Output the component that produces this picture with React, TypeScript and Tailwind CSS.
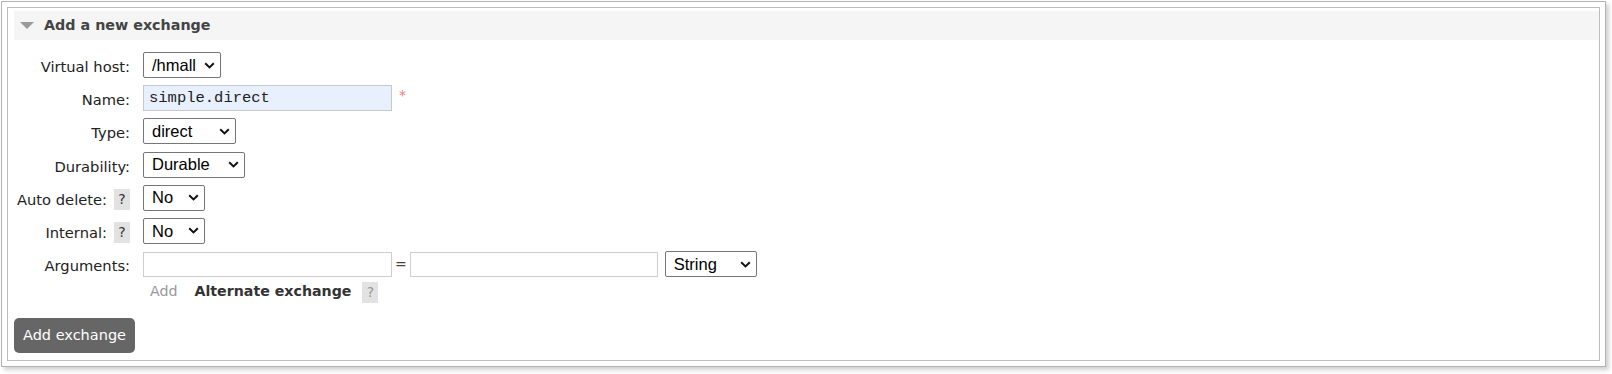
import type { ReactNode } from 'react'

const label = "font-['DejaVu_Sans',sans-serif] text-[14.7px] text-[#222]"

function Chevron() {
  return (
    <svg width="11" height="7" viewBox="0 0 11 7" className="shrink-0">
      <path d="M1.2 1.2 5.5 5.4 9.8 1.2" fill="none" stroke="#111" strokeWidth="2" />
    </svg>
  )
}

function FakeSelect({ value, className }: { value: string; className: string }) {
  return (
    <div
      className={`flex h-[26px] items-center justify-between rounded-[2px] border border-[#767676] bg-white pl-[8px] pr-[5px] font-['Liberation_Sans',Arial,sans-serif] text-[16.5px] text-black ${className}`}
    >
      <span>{value}</span>
      <Chevron />
    </div>
  )
}

function Help() {
  return (
    <span className="ml-[7px] inline-flex h-[21px] w-[16px] items-center justify-center bg-[#e2e2e2] text-[14px] text-[#333]">?</span>
  )
}

function Row({ name, help, children }: { name: string; help?: boolean; children: ReactNode }) {
  return (
    <div className="flex h-[26px] items-center">
      <div className={`flex w-[116px] shrink-0 items-center justify-end pt-[4px] ${label}`}>
        <span>{name}</span>
        {help && <Help />}
      </div>
      <div className="ml-[13px] flex items-center">{children}</div>
    </div>
  )
}

export default function App() {
  return (
    <div className="h-[374px] w-[1612px] bg-white pl-[1px] pt-[1px]">
      <div className="h-[366px] w-[1605px] border border-[#b3b3b3] p-[5px] shadow-[3px_3px_4px_rgba(0,0,0,0.18)]">
        <div className="flex h-full flex-col border border-[#bdbdbd] pl-[6px] pt-[3px]">
          <div className="flex h-[29px] items-center bg-[#f5f5f5]">
            <svg width="14" height="7" viewBox="0 0 14 7" className="ml-[6px]">
              <path d="M0 0h14L7 7z" fill="#9a9a9a" />
            </svg>
            <h2 className="ml-[10px] font-['DejaVu_Sans',sans-serif] text-[14.3px] font-bold text-[#444]">Add a new exchange</h2>
          </div>

          <div className="mt-[12px] flex flex-col gap-[7.2px]">
            <Row name="Virtual host:">
              <FakeSelect value="/hmall" className="w-[78px]" />
            </Row>
            <Row name="Name:">
              <div className="flex h-[26px] w-[249px] items-center border border-[#c8c8c8] bg-[#e8f0fe] pl-[5px] font-['Liberation_Mono',monospace] text-[15.5px] text-[#222]">
                simple.direct
              </div>
              <span className="ml-[7px] -mt-[6px] font-['DejaVu_Sans',sans-serif] text-[14px] text-[#f77]">*</span>
            </Row>
            <Row name="Type:">
              <FakeSelect value="direct" className="w-[93px]" />
            </Row>
            <Row name="Durability:">
              <FakeSelect value="Durable" className="w-[102px]" />
            </Row>
            <Row name="Auto delete:" help>
              <FakeSelect value="No" className="w-[62px]" />
            </Row>
            <Row name="Internal:" help>
              <FakeSelect value="No" className="w-[62px]" />
            </Row>
            <Row name="Arguments:">
              <div className="h-[25px] w-[249px] border border-[#cfcfcf] bg-white" />
              <span className="mx-[3px] font-['DejaVu_Sans',sans-serif] text-[14px] text-[#444]">=</span>
              <div className="h-[25px] w-[248px] border border-[#cfcfcf] bg-white" />
              <FakeSelect value="String" className="ml-[7px] w-[92px]" />
            </Row>
          </div>

          <div className="ml-[136px] mt-[4px] flex h-[22px] items-center font-['DejaVu_Sans',sans-serif] text-[14.2px]">
            <span className="text-[#999]">Add</span>
            <span className="ml-[17px] font-bold text-[#333]">Alternate exchange</span>
            <span className="ml-[11px] inline-flex h-[21px] w-[16px] items-center justify-center bg-[#e2e2e2] text-[14px] text-[#999]">?</span>
          </div>

          <button className="mt-[15px] h-[35px] w-[121px] rounded-[5px] bg-[#666] font-['DejaVu_Sans',sans-serif] text-[14.5px] text-white">
            Add exchange
          </button>
        </div>
      </div>
    </div>
  )
}
